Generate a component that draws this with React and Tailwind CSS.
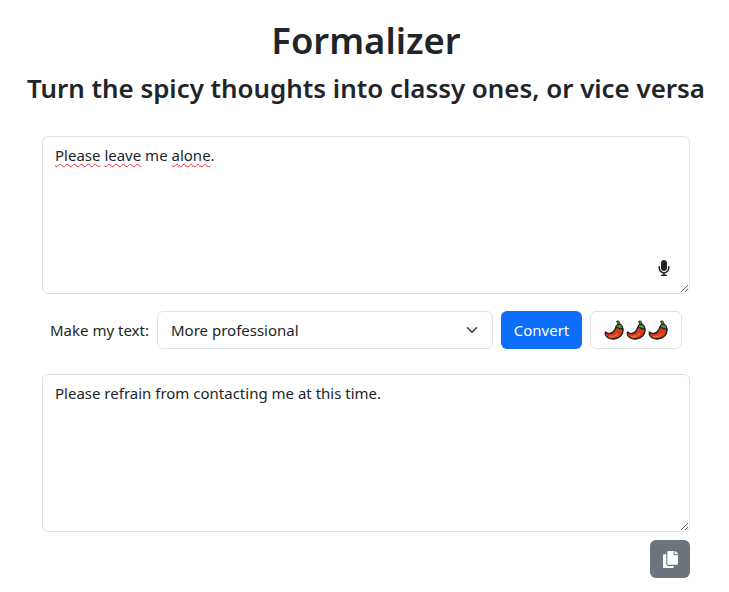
import { useState } from 'react'
import { FaCopy, FaMicrophone } from 'react-icons/fa'

const ChiliIcon = () => (
  <svg width="20" height="20" viewBox="0 0 20 20" aria-hidden="true">
    <path d="M1.500 12C4 14.500 8 14 10 11c1.500-2 1.500-3.500 2.500-4.500L18 7c1.500 3 1 6.500-1.500 9-3 3-8.500 3.800-12 2C2 16.700.8 14 1.500 12z" fill="#dd3a1c" stroke="#241c1a" strokeWidth="1.400" strokeLinejoin="round" />
    <path d="M11.800 8c.2-2.500 1.700-4 3.700-4 2 .5 3.300 2.500 3.500 5.500-1-1-2-1.200-3-.5-1.200-1-2.800-1.500-4.200-1z" fill="#3b9a35" stroke="#241c1a" strokeWidth="1.100" strokeLinejoin="round" />
    <path d="M13.500 4.500c.3-1 0-2-1-3l1.800-.7c1.200 1 1.700 2.400 1.700 3.700z" fill="#3b9a35" stroke="#241c1a" strokeWidth="1" strokeLinejoin="round" />
    <path d="M5.500 16.500c2.800.5 6-.5 8-2.500" fill="none" stroke="#ee6b35" strokeWidth="1.100" strokeLinecap="round" />
  </svg>
)

function SpellError({ children }) {
  return <span className="underline decoration-wavy decoration-[#e0323c] decoration-1 underline-offset-2">{children}</span>
}

function App() {
  const [mode, setMode] = useState('More professional')

  return (
    <div className="w-[729px] h-[592px] overflow-hidden bg-white text-[#212529] font-['Noto_Sans',sans-serif]">
      <div className="text-center pt-4 pl-[3px]">
        <h1 className="text-[36.4px] leading-[48px] font-semibold">Formalizer</h1>
        <h2 className="mt-[7px] text-[25.9px] leading-[34px] font-semibold">Turn the spicy thoughts into classy ones, or vice versa</h2>
      </div>

      <div className="w-[648px] ml-[42px] mt-[31px]">
        {/* Input text */}
        <div className="relative">
          <div className="h-[158px] resize overflow-auto border border-[#dee2e6] rounded-md px-3 py-[6px] text-[15px] leading-6">
            <SpellError>Please</SpellError> <SpellError>leave</SpellError> me <SpellError>alone</SpellError>.
          </div>
          <span className="absolute right-[18px] bottom-[18px] flex">
            <FaMicrophone size={16} color="#212529" />
          </span>
        </div>

        {/* Controls */}
        <div className="flex items-center mt-[17px] h-[38px]">
          <label className="ml-2 w-[107px] text-[15px]">Make my text:</label>
          <div className="relative w-[336px]">
            <select
              value={mode}
              onChange={(e) => setMode(e.target.value)}
              className="w-full h-[38px] appearance-none border border-[#dee2e6] rounded-md bg-white pl-[13px] pr-9 text-[15px]"
            >
              <option>More professional</option>
              <option>More casual</option>
            </select>
            <svg className="absolute right-[15px] top-[13px] pointer-events-none" width="12" height="12" viewBox="0 0 16 16" fill="none" stroke="#343a40" strokeWidth="2" strokeLinecap="round" strokeLinejoin="round">
              <path d="m2 5 6 6 6-6" />
            </svg>
          </div>
          <button className="ml-2 w-[81px] h-[38px] rounded-md bg-[#0d6efd] text-white text-[15px]">Convert</button>
          <button className="ml-2 w-[92px] h-[38px] rounded-md border border-[#dee2e6] flex items-center justify-center gap-[2px]">
            <ChiliIcon />
            <ChiliIcon />
            <ChiliIcon />
          </button>
        </div>

        {/* Output text */}
        <div className="h-[158px] mt-[25px] resize overflow-auto border border-[#dee2e6] rounded-md px-3 py-[6px] text-[15px] leading-6">
          Please refrain from contacting me at this time.
        </div>

        <div className="flex justify-end mt-2">
          <button className="w-10 h-[38px] rounded-md bg-[#6c757d] flex items-center justify-center">
            <FaCopy size={17} color="#fff" />
          </button>
        </div>
      </div>
    </div>
  )
}

export default App
